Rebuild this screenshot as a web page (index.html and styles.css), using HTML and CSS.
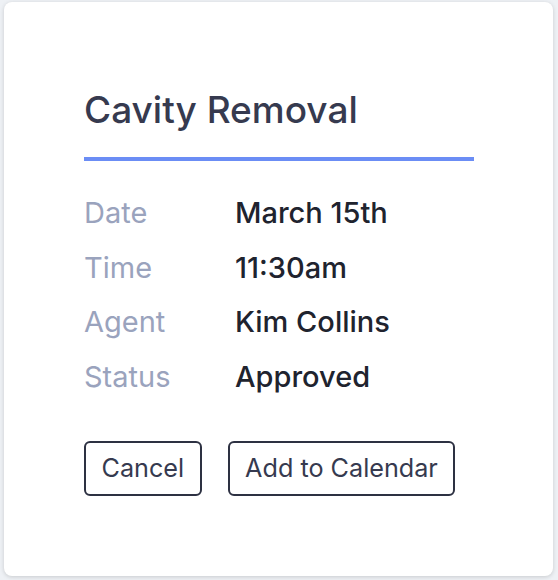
FILE: index.html
```html
<!DOCTYPE html>
<html>
<head>
<meta charset="utf-8">
<link rel="stylesheet" href="styles.css">
</head>
<body>
<div class="card">
  <h1 class="title">Cavity Removal</h1>
  <div class="rule"></div>
  <dl class="details">
    <dt>Date</dt><dd>March 15th</dd>
    <dt>Time</dt><dd>11:30am</dd>
    <dt>Agent</dt><dd>Kim Collins</dd>
    <dt>Status</dt><dd>Approved</dd>
  </dl>
  <div class="actions">
    <button class="btn">Cancel</button>
    <button class="btn">Add to Calendar</button>
  </div>
</div>
</body>
</html>
```
FILE: styles.css
```css
html, body {
  margin: 0;
  padding: 0;
  background: #eef1f5;
}
body {
  width: 558px;
  height: 580px;
  overflow: hidden;
  font-family: Inter, "Noto Sans", sans-serif;
}
.card {
  box-sizing: border-box;
  margin: 2px 5px 0 4px;
  height: 574px;
  background: #fff;
  border-radius: 8px;
  box-shadow: 0 1px 4px rgba(0, 0, 0, 0.16);
  padding: 84px 79px 0 80px;
}
.title {
  margin: 0;
  font-size: 37px;
  line-height: 48px;
  font-weight: 500;
  color: #363a4f;
}
.rule {
  height: 4px;
  background: #6b8df5;
  margin-top: 23px;
}
.details {
  display: grid;
  grid-template-columns: 151px 1fr;
  row-gap: 20.5px;
  margin: 35px 0 0 0;
  font-size: 29px;
  line-height: 34px;
}
.details dt {
  color: #9aa3bd;
}
.details dd {
  margin: 0;
  color: #20232e;
  font-weight: 500;
}
.actions {
  display: flex;
  gap: 26px;
  margin-top: 47px;
}
.btn {
  font-family: inherit;
  font-size: 25.2px;
  color: #363a4f;
  background: #fff;
  border: 2px solid #2d3142;
  border-radius: 6px;
  height: 55px;
  padding: 0 15.5px;
}
```
